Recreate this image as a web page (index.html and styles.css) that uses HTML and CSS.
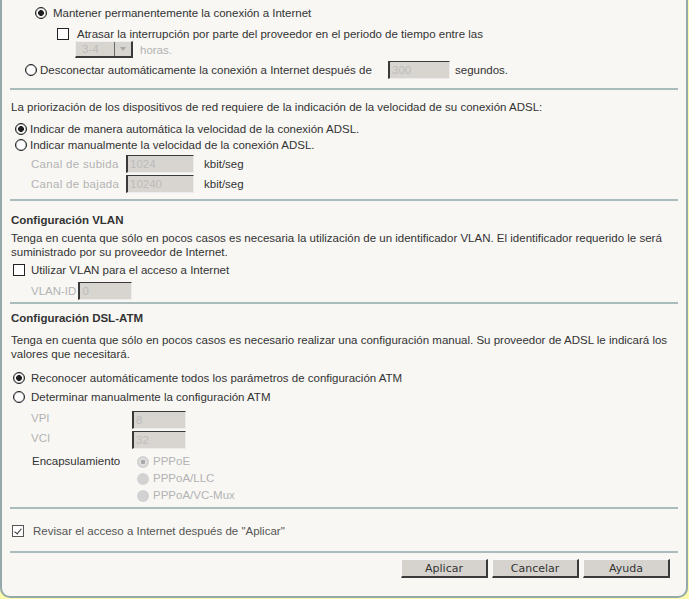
FILE: index.html
```html
<!DOCTYPE html>
<html>
<head>
    <title>Acceso a Internet</title>
    <meta http-equiv="Content-Type" content="text/html; charset=utf8" />
    <link rel="stylesheet" href="styles.css">
</head>
<body>
<div class="panel">

    <!-- mantener / desconectar -->
    <div class="line keep"><span class="radio on"></span>Mantener permanentemente la conexión a Internet</div>
    <div class="line delay"><span class="box"></span>Atrasar la interrupción por parte del proveedor en el periodo de tiempo entre las</div>
    <div class="line hours">
        <span class="sel"><span class="val">3-4</span><span class="arrow"><i></i></span></span>
        <span class="off">horas.</span>
    </div>
    <div class="line cut">
        <span class="radio"></span>
        <span class="txt">Desconectar automáticamente la conexión a Internet después de</span>
        <span class="field secs">300</span>segundos.
    </div>

    <div class="sep s1"></div>

    <!-- velocidad ADSL -->
    <div class="line intro">La priorización de los dispositivos de red requiere de la indicación de la velocidad de su conexión ADSL:</div>
    <div class="line auto"><span class="radio on"></span>Indicar de manera automática la velocidad de la conexión ADSL.</div>
    <div class="line manual"><span class="radio"></span>Indicar manualmente la velocidad de la conexión ADSL.</div>
    <div class="line rate up"><span class="lbl off">Canal de subida</span><span class="field">1024</span><span class="unit">kbit/seg</span></div>
    <div class="line rate down"><span class="lbl off">Canal de bajada</span><span class="field">10240</span><span class="unit">kbit/seg</span></div>

    <div class="sep s2"></div>

    <!-- VLAN -->
    <h3 class="vlan-head">Configuración VLAN</h3>
    <p class="note vlan-note">Tenga en cuenta que sólo en pocos casos es necesaria la utilización de un identificador VLAN. El identificador requerido le será suministrado por su proveedor de Internet.</p>
    <div class="line vlan"><span class="box"></span>Utilizar VLAN para el acceso a Internet</div>
    <div class="line vid"><span class="lbl off">VLAN-ID</span><span class="field">0</span></div>

    <div class="sep s3"></div>

    <!-- DSL-ATM -->
    <h3 class="atm-head">Configuración DSL-ATM</h3>
    <p class="note atm-note">Tenga en cuenta que sólo en pocos casos es necesario realizar una configuración manual. Su proveedor de ADSL le indicará los valores que necesitará.</p>
    <div class="line recon"><span class="radio on"></span>Reconocer automáticamente todos los parámetros de configuración ATM</div>
    <div class="line determ"><span class="radio"></span>Determinar manualmente la configuración ATM</div>
    <div class="line atm vpi"><span class="lbl off">VPI</span><span class="field">8</span></div>
    <div class="line atm vci"><span class="lbl off">VCI</span><span class="field">32</span></div>
    <div class="encap">
        <span class="lbl">Encapsulamiento</span>
        <div class="modes">
            <div class="mode"><span class="radio dim on"></span>PPPoE</div>
            <div class="mode"><span class="radio dim"></span>PPPoA/LLC</div>
            <div class="mode"><span class="radio dim"></span>PPPoA/VC-Mux</div>
        </div>
    </div>

    <div class="sep s4"></div>

    <div class="line recheck"><span class="box on"></span>Revisar el acceso a Internet después de "Aplicar"</div>

    <div class="sep s5"></div>

    <div class="buttons">
        <button class="btn">Aplicar</button>
        <button class="btn">Cancelar</button>
        <button class="btn">Ayuda</button>
    </div>
</div>
</body>
</html>
```

FILE: styles.css
```css
html, body {
    margin:0;
    padding:0;
}
body {
    background:#fbfbab;
    font-family:"Liberation Sans", Arial, sans-serif;
    font-size:11.5px;
    color:#333;
}

/*** main box: no top edge, rounded bottom ***/
.panel {
    box-sizing:border-box;
    width:688px;
    height:598px;
    padding:4px 8px 0 8px;
    background:#f8f7f3;
    border:2px solid #93a9aa;
    border-top:0;
    border-radius:0 0 10px 10px;
}

.sep {
    height:2px;
    background:#a9bbbb;
}

.line {
    display:flex;
    align-items:center;
    height:14px;
    line-height:14px;
    white-space:nowrap;
}

h3 {
    margin:0;
    padding-left:1px;
    font-size:11.5px;
    line-height:14px;
    font-weight:bold;
    color:#333;
}
.note {
    margin:0;
    padding-left:1px;
    line-height:14px;
}

.off { color:#b3b3b3; }

/*** radio buttons and check boxes ***/
.radio {
    box-sizing:border-box;
    flex:none;
    width:12px;
    height:12px;
    border:1px solid #1e1e1e;
    border-radius:50%;
    background:#fdfdfd;
    box-shadow:inset 0 0 0 0.5px rgba(0,0,0,0.4);
}
.radio.on {
    background:radial-gradient(circle, #1e1e1e 0 2.6px, #fdfdfd 3.2px);
}
.radio.dim {
    border:0;
    box-shadow:none;
    background:#d2d2d2;
}
.radio.dim.on {
    background:radial-gradient(circle, #a9a9a9 0 2px, #e2e2e2 2.6px 3.4px, #d2d2d2 4px);
}

.box {
    box-sizing:border-box;
    position:relative;
    flex:none;
    width:12px;
    height:12px;
    border:1px solid #222;
    background:#fdfdfd;
}
.box.on { border-color:#555; }
.box.on:after {
    content:"";
    position:absolute;
    left:3px;
    top:1px;
    width:3px;
    height:6px;
    border-right:1px solid #333;
    border-bottom:1px solid #333;
    transform:rotate(40deg);
}

/*** disabled edit fields ***/
.field {
    box-sizing:border-box;
    flex:none;
    height:18px;
    padding-left:2px;
    line-height:16px;
    background:#d8d5d0;
    color:#bcbcbc;
    border-top:1px solid #3a3a3a;
    border-left:2px solid #3a3a3a;
    border-right:1px solid #ececec;
    border-bottom:1px solid #ececec;
}

/*** disabled drop down ***/
.sel {
    box-sizing:border-box;
    display:flex;
    width:58px;
    height:17px;
    background:#d8d5d0;
    border-top:1px solid #efefef;
    border-left:1px solid #efefef;
    border-right:2px solid #3a3a3a;
    border-bottom:2px solid #3a3a3a;
}
.sel .val {
    flex:1;
    padding-left:6px;
    line-height:14px;
    color:#bcbcbc;
}
.sel .arrow {
    width:16px;
    display:flex;
    align-items:center;
    justify-content:center;
    border-left:1px solid #6a6a6a;
}
.sel .arrow i {
    width:0;
    height:0;
    border-left:3px solid transparent;
    border-right:3px solid transparent;
    border-top:4px solid #a8a8a8;
}

/*** first group ***/
.keep { height:18px; padding-left:25px; gap:6px; }
.delay { margin-top:5px; padding-left:47px; gap:8px; }
.hours { height:17px; padding-left:65px; gap:7px; }
.cut { height:18px; margin-top:3px; padding-left:15px; }
.cut .txt { width:348px; margin-left:3px; }
.cut .secs { width:62px; margin-right:5px; }
.s1 { margin-top:9px; }

/*** speed group ***/
.intro { margin-top:10px; padding-left:1px; }
.auto { margin-top:8px; padding-left:5px; gap:3px; }
.manual { margin-top:2px; padding-left:5px; gap:3px; }
.rate { height:18px; padding-left:21px; }
.rate .lbl { width:95px; letter-spacing:0.3px; }
.rate .field { width:68px; }
.rate .unit { margin-left:10px; }
.up { margin-top:3px; }
.down { margin-top:2px; }
.s2 { margin-top:6px; }

/*** VLAN group ***/
.vlan-head { margin-top:12px; }
.vlan-note { margin-top:4px; }
.vlan { margin-top:4px; padding-left:3px; gap:6px; }
.vid { height:18px; margin-top:5px; padding-left:21px; }
.vid .lbl { margin-right:2px; }
.vid .field { width:54px; }
.s3 { margin-top:2px; }

/*** ATM group ***/
.atm-head { margin-top:7px; }
.atm-note { margin-top:8px; }
.recon { margin-top:10px; padding-left:3px; gap:6px; }
.determ { margin-top:5px; padding-left:3px; gap:6px; }
.atm { height:18px; padding-left:21px; align-items:flex-start; }
.atm .lbl { width:101px; }
.atm .field { width:54px; }
.vpi { margin-top:7px; }
.vci { margin-top:2px; }
.encap {
    display:flex;
    margin-top:4px;
    padding-left:22px;
    line-height:17px;
}
.encap .lbl { width:105px; }
.mode {
    display:flex;
    align-items:center;
    gap:4px;
    height:17px;
    color:#b3b3b3;
}
.s4 { margin-top:3px; }

.recheck { margin-top:15px; padding-left:2px; gap:9px; color:#555; }
.s5 { margin-top:13px; }

/*** Aplicar / Cancelar / Ayuda ***/
.buttons {
    display:flex;
    justify-content:flex-end;
    gap:4px;
    margin-top:6px;
    padding-right:8px;
}
.btn {
    box-sizing:border-box;
    width:87px;
    height:19px;
    margin:0;
    padding:0;
    font-family:"DejaVu Sans", sans-serif;
    font-size:11px;
    color:#333;
    background:#d6d3cf;
    border-top:1px solid #fafafa;
    border-left:1px solid #fafafa;
    border-right:2px solid #3a3a3a;
    border-bottom:2px solid #3a3a3a;
    border-radius:0;
}
```
